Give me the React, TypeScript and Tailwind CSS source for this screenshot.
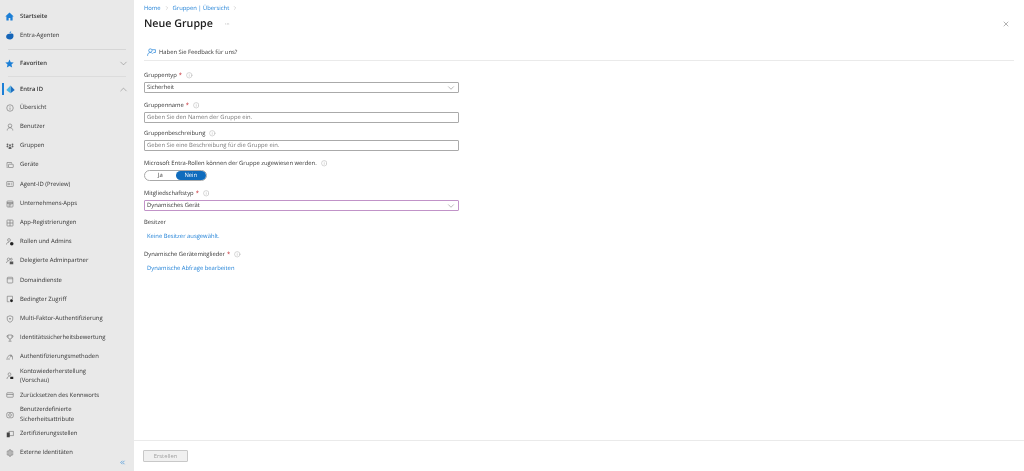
import type { ReactNode } from "react";
import { ChevronDown, ChevronRight, ChevronUp, ChevronsLeft, Info, X } from "lucide-react";

function Glyph({ children }: { children: ReactNode }) {
  return (
    <svg
      viewBox="0 0 16 16"
      className="h-[8px] w-[8px] shrink-0"
      fill="none"
      stroke="#707070"
      strokeWidth="1.2"
    >
      {children}
    </svg>
  );
}

type NavItem = { label: string[]; icon: ReactNode };

const navItems: NavItem[] = [
  {
    label: ["Übersicht"],
    icon: (
      <>
        <circle cx="8" cy="8" r="6.5" />
        <path d="M8 7v4.5M8 4.2v1.3" />
      </>
    ),
  },
  {
    label: ["Benutzer"],
    icon: (
      <>
        <circle cx="8" cy="5.5" r="3.6" />
        <path d="M2.5 15c0-3.5 2-5.5 5.5-5.5s5.500 2 5.500 5.500" />
      </>
    ),
  },
  {
    label: ["Gruppen"],
    icon: (
      <g fill="#666" stroke="none">
        <circle cx="3" cy="5" r="1.800" />
        <circle cx="13" cy="5" r="1.800" />
        <circle cx="8" cy="6.500" r="2" />
        <path d="M5 14c0-3 1-5 3-5s3 2 3 5zM1 10c0-2 1-3 2.500-3L5 9l-1 2zM15 10c0-2-1-3-2.500-3L11 9l1 2z" />
      </g>
    ),
  },
  {
    label: ["Geräte"],
    icon: (
      <>
        <path d="M2 11V3h9v2" />
        <rect x="5" y="6.500" width="9.500" height="6.500" rx="1" />
        <path d="M1 12.500h4" />
      </>
    ),
  },
  {
    label: ["Agent-ID (Preview)"],
    icon: (
      <>
        <rect x="1.500" y="3" width="13" height="10" rx="1" />
        <path d="M4 6.500h3v3H4zM9.500 6.500H12M9.500 9.500H12" strokeWidth="1" />
      </>
    ),
  },
  {
    label: ["Unternehmens-Apps"],
    icon: (
      <>
        <rect x="2" y="2" width="12" height="12" rx="1.500" />
        <path d="M2 6h12" strokeWidth="2.500" />
        <path d="M5 9.500h6M5 12h4" strokeWidth="1.500" />
      </>
    ),
  },
  {
    label: ["App-Registrierungen"],
    icon: (
      <>
        <rect x="2" y="2" width="12" height="12" rx="1" />
        <path d="M8 2v12M2 8h12" />
      </>
    ),
  },
  {
    label: ["Rollen und Admins"],
    icon: (
      <>
        <circle cx="6" cy="4" r="2.800" />
        <path d="M1 13c0-3 2-4.500 5-4.500" />
        <circle cx="11.500" cy="11.500" r="3.500" fill="#222" stroke="none" />
      </>
    ),
  },
  {
    label: ["Delegierte Adminpartner"],
    icon: (
      <>
        <circle cx="5" cy="4.500" r="2.500" />
        <path d="M1 12c0-3 1.500-4 4-4" />
        <circle cx="10.500" cy="4.500" r="2" />
        <rect x="7.500" y="9" width="7" height="5.500" fill="#555" stroke="none" />
      </>
    ),
  },
  {
    label: ["Domaindienste"],
    icon: (
      <>
        <rect x="2.500" y="2.500" width="11" height="11.500" rx="1.500" />
        <path d="M2.500 5.500h11" />
      </>
    ),
  },
  {
    label: ["Bedingter Zugriff"],
    icon: (
      <>
        <path d="M13 8V2.500H2.500v11H7" />
        <circle cx="11" cy="11.500" r="2.800" fill="#222" stroke="none" />
      </>
    ),
  },
  {
    label: ["Multi-Faktor-Authentifizierung"],
    icon: (
      <>
        <path d="M8 1.500l5.500 2V8c0 3.500-2.500 5.500-5.500 6.500C5 13.500 2.500 11.500 2.500 8V3.500z" />
        <circle cx="8" cy="7.500" r="1.300" fill="#555" stroke="none" />
      </>
    ),
  },
  {
    label: ["Identitätssicherheitsbewertung"],
    icon: (
      <>
        <path d="M4 2h8v4a4 4 0 0 1-8 0zM8 10v4M5 14.500h6M4 3.500H2v1.500c0 1 .8 2 2 2M12 3.500h2v1.500c0 1-.8 2-2 2" />
      </>
    ),
  },
  {
    label: ["Authentifizierungsmethoden"],
    icon: (
      <>
        <path d="M2 14c0-4 1-7 4-9 3-2 7-1 7 3v5" />
        <circle cx="10" cy="6" r="1.500" fill="#555" stroke="none" />
        <path d="M6 14v-3l2-2" />
      </>
    ),
  },
  {
    label: ["Kontowiederherstellung", "(Vorschau)"],
    icon: (
      <>
        <circle cx="7" cy="4.500" r="2.800" />
        <path d="M2 14c0-3.500 2-5 5-5" />
        <rect x="8.500" y="9.500" width="6" height="4.500" fill="#222" stroke="none" />
      </>
    ),
  },
  {
    label: ["Zurücksetzen des Kennworts"],
    icon: (
      <>
        <rect x="1.500" y="3.500" width="13" height="9" rx="1.500" />
        <path d="M1.500 7h13" />
      </>
    ),
  },
  {
    label: ["Benutzerdefinierte", "Sicherheitsattribute"],
    icon: (
      <>
        <rect x="1.500" y="3" width="13" height="10.500" rx="3" />
        <circle cx="8" cy="8" r="2.800" />
      </>
    ),
  },
  {
    label: ["Zertifizierungsstellen"],
    icon: (
      <>
        <rect x="6" y="2.500" width="8.500" height="9" />
        <rect x="1.500" y="5" width="6" height="9.500" fill="#444" stroke="none" />
      </>
    ),
  },
  {
    label: ["Externe Identitäten"],
    icon: (
      <>
        <rect x="5.500" y="1.500" width="5" height="13" rx="2" />
        <path d="M8 1.500v13M5 4H2.500v8H5M11 4h2.500v8H11" />
      </>
    ),
  },
];

function NavRow({ item }: { item: NavItem }) {
  return (
    <div className="flex h-[19.2px] items-center pl-[6px]">
      <Glyph>{item.icon}</Glyph>
      <div className="ml-[6px] leading-[9.5px]">
        {item.label.map((line) => (
          <div key={line}>{line}</div>
        ))}
      </div>
    </div>
  );
}

function Sidebar() {
  return (
    <aside className="flex h-full w-[134px] shrink-0 flex-col bg-[#e9e9e9] pt-[7px] text-[5.9px] text-[#333]">
      <div className="flex h-[19px] items-center pl-[5px]">
        <svg viewBox="0 0 16 16" className="h-[9px] w-[9px]">
          <path d="M8 1 L15.500 8 H13.500 V15 H9.500 V10.500 H6.500 V15 H2.500 V8 H.5 Z" fill="#1c7fd6" />
        </svg>
        <span className="ml-[6px] font-semibold">Startseite</span>
      </div>
      <div className="flex h-[19px] items-center pl-[5px]">
        <svg viewBox="0 0 16 16" className="h-[9px] w-[9px]">
          <path d="M9 5c2-1 5-1 6 1v4c-1 3-3 5-6 5-4 0-7-2-7-5 0-4 4-6 7-5z" fill="#1565b8" />
          <path d="M8 4c0-2 1-3 3-3 0 2-1 3-3 3z" fill="#2f8fe0" />
        </svg>
        <span className="ml-[6px]">Entra-Agenten</span>
      </div>
      <div className="mx-[8px] mt-[4px] h-px bg-[#d6d6d6]" />
      <div className="flex h-[26px] items-center pl-[5px] pr-[5px]">
        <svg viewBox="0 0 16 16" className="h-[9px] w-[9px]">
          <path d="M8 .8l2.200 4.900 5.300.6-4 3.500 1.200 5.300L8 12.400l-4.700 2.700 1.200-5.300-4-3.500 5.300-.6z" fill="#1c7fd6" />
        </svg>
        <span className="ml-[6px] font-semibold">Favoriten</span>
        <ChevronDown className="ml-auto h-[11px] w-[11px] text-[#777]" strokeWidth={1.1} />
      </div>
      <div className="mx-[8px] h-px bg-[#dcdcdc]" />
      <div className="relative mt-[3px] flex h-[18px] items-center pl-[6px] pr-[5px]">
        <span className="absolute left-[2px] top-[3px] h-[12px] w-[2px] bg-[#1c7fd6]" />
        <svg viewBox="0 0 16 16" className="h-[9px] w-[9px]">
          <path d="M8 1 L15.500 9 L8 14.500 Z" fill="#1c6fc0" />
          <path d="M8 1 L.5 9 L8 14.500 Z" fill="#46b4e8" />
        </svg>
        <span className="ml-[5px] font-semibold">Entra ID</span>
        <ChevronUp className="ml-auto h-[11px] w-[11px] text-[#777]" strokeWidth={1.1} />
      </div>
      {navItems.map((item) => (
        <NavRow item={item} key={item.label[0]} />
      ))}
      <div className="-mt-[4px] flex justify-end pr-[8px]">
        <ChevronsLeft className="h-[7px] w-[7px] text-[#1c7fd6]" strokeWidth={2} />
      </div>
    </aside>
  );
}

function FieldLabel({ text, required, info = true }: { text: string; required?: boolean; info?: boolean }) {
  return (
    <div className="flex h-[9px] items-center text-[5.85px] text-[#333]">
      {text}
      {required && <span className="ml-[2px] text-[#c4262e]">*</span>}
      {info && <Info className="ml-[4px] h-[6.5px] w-[6.5px] text-[#888]" strokeWidth={1.2} />}
    </div>
  );
}

function SelectBox({ value, highlight }: { value: string; highlight?: boolean }) {
  return (
    <div
      className={`mt-[2px] flex h-[11px] w-[315px] items-center rounded-[1px] border px-[2px] text-[5.85px] text-[#333] ${
        highlight ? "border-[#c193c8]" : "border-[#aaa]"
      }`}
    >
      {value}
      <ChevronDown className="ml-auto h-[10px] w-[10px] text-[#666]" strokeWidth={1.1} />
    </div>
  );
}

function TextBox({ placeholder }: { placeholder: string }) {
  return (
    <div className="mt-[2px] flex h-[11px] w-[315px] items-center rounded-[1px] border border-[#aaa] px-[2px] text-[5.85px] text-[#777]">
      {placeholder}
    </div>
  );
}

export default function App() {
  return (
    <div
      className="flex h-[471px] w-[1024px] overflow-hidden bg-white blur-[0.35px] [text-rendering:geometricPrecision]"
      style={{ fontFamily: '"Open Sans", "Noto Sans", sans-serif' }}
    >
      <Sidebar />
      <main className="flex min-w-0 flex-1 flex-col">
        <div className="flex-1 px-[10px] pt-[4px]">
          <div className="flex h-[8px] items-center gap-[3px] text-[5.85px] text-[#1c7fd6]">
            <span>Home</span>
            <ChevronRight className="h-[6px] w-[6px] text-[#888]" strokeWidth={1.2} />
            <span>Gruppen | Übersicht</span>
            <ChevronRight className="h-[6px] w-[6px] text-[#888]" strokeWidth={1.2} />
          </div>
          <div className="mt-[5px] flex h-[14px] items-center">
            <h1 className="text-[10.7px] font-semibold text-[#222]">Neue Gruppe</h1>
            <span className="ml-[12px] text-[6px] text-[#777]">···</span>
            <X className="ml-auto mr-[4px] h-[8px] w-[8px] text-[#666]" strokeWidth={1.5} />
          </div>
          <div className="mt-[16px] flex h-[14px] items-center border-b border-[#eaeaea] pb-[3px] text-[5.85px] text-[#333]">
            <svg viewBox="0 0 16 16" className="ml-[3px] mr-[3px] h-[9px] w-[9px]" fill="none" stroke="#1c7fd6" strokeWidth="1.200">
              <circle cx="6" cy="4.500" r="3" />
              <path d="M1 14c0-4 2-6 5-6 1.500 0 2.500.5 3 1.500M9 3h6v5h-3l-2 2" />
            </svg>
            Haben Sie Feedback für uns?
          </div>

          <div className="mt-[10px]">
            <FieldLabel text="Gruppentyp" required />
            <SelectBox value="Sicherheit" />
          </div>
          <div className="mt-[8px]">
            <FieldLabel text="Gruppenname" required />
            <TextBox placeholder="Geben Sie den Namen der Gruppe ein." />
          </div>
          <div className="mt-[6px]">
            <FieldLabel text="Gruppenbeschreibung" />
            <TextBox placeholder="Geben Sie eine Beschreibung für die Gruppe ein." />
          </div>
          <div className="mt-[8px]">
            <FieldLabel text="Microsoft Entra-Rollen können der Gruppe zugewiesen werden." />
            <div className="mt-[2px] flex h-[11px] w-[63px] rounded-full border border-[#aaa] text-[5.85px]">
              <span className="flex flex-1 items-center justify-center text-[#333]">Ja</span>
              <span className="flex flex-1 items-center justify-center rounded-full bg-[#0f6cbd] text-white">
                Nein
              </span>
            </div>
          </div>
          <div className="mt-[8px]">
            <FieldLabel text="Mitgliedschaftstyp" required />
            <SelectBox value="Dynamisches Gerät" highlight />
          </div>
          <div className="mt-[7px]">
            <FieldLabel text="Besitzer" info={false} />
            <div className="mt-[5px] h-[8px] pl-[3px] text-[5.85px] leading-[8px] text-[#1c7fd6]">Keine Besitzer ausgewählt.</div>
          </div>
          <div className="mt-[10px]">
            <FieldLabel text="Dynamische Gerätemitglieder" required />
            <div className="mt-[5px] h-[8px] pl-[3px] text-[5.85px] leading-[8px] text-[#1c7fd6]">Dynamische Abfrage bearbeiten</div>
          </div>
        </div>
        <div className="flex h-[31px] items-center border-t border-[#eaeaea] px-[9px]">
          <button className="h-[12px] w-[45px] rounded-[1px] border border-[#c8c8c8] bg-[#f0f0f0] text-[5.85px] text-[#a0a0a0]">
            Erstellen
          </button>
        </div>
      </main>
    </div>
  );
}
